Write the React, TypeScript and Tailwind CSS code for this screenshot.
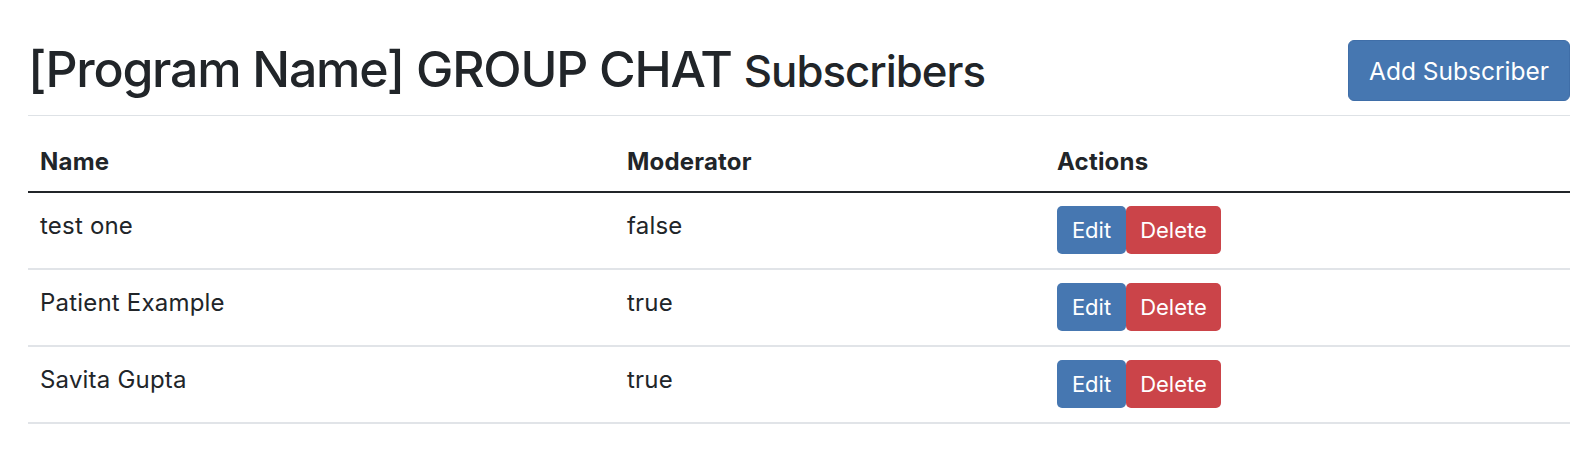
import React from "react";

const rows = [
  { name: "test one", moderator: "false" },
  { name: "Patient Example", moderator: "true" },
  { name: "Savita Gupta", moderator: "true" },
];

export default function App() {
  return (
    <div
      className="min-h-[466px] bg-white pl-[28px] pr-[24px] text-[#212529]"
      style={{ fontFamily: "Inter, 'Noto Sans', sans-serif" }}
    >
      <div className="flex items-center justify-between border-b border-[#dee2e6] pt-[39px] pb-[13px]">
        <h2 className="text-[50px] font-medium leading-[60px] tracking-[-1.25px]">
          [Program Name] GROUP CHAT{" "}
          <small className="text-[0.875em] tracking-[-1px]">Subscribers</small>
        </h2>
        <button className="h-[61px] rounded-[6px] border border-[#3f6ea8] bg-[#4677b1] px-[20px] text-[24.5px] leading-[36px] text-white">
          Add Subscriber
        </button>
      </div>

      <table className="mt-[16px] w-full border-collapse text-[24px] leading-[36px] tracking-[0.2px]">
        <thead>
          <tr className="border-b-2 border-[#212529]">
            <th className="w-[587px] px-[12px] pt-[12px] pb-[11px] text-left font-bold">Name</th>
            <th className="w-[430px] px-[12px] pt-[12px] pb-[11px] text-left font-bold">Moderator</th>
            <th className="px-[12px] pt-[12px] pb-[11px] text-left font-bold">Actions</th>
          </tr>
        </thead>
        <tbody>
          {rows.map((r) => (
            <tr key={r.name} className="h-[77px] border-b-2 border-[#e1e4e8]">
              <td className="px-[12px] pt-[15px] align-top">{r.name}</td>
              <td className="px-[12px] pt-[15px] align-top">{r.moderator}</td>
              <td className="px-[12px] pt-[13px] align-top">
                <div className="flex">
                  <button className="h-[48px] w-[69px] rounded-[5px] bg-[#4677b1] text-[22px] leading-[30px] tracking-normal text-white">
                    Edit
                  </button>
                  <button className="h-[48px] w-[95px] rounded-[5px] bg-[#cb4449] text-[22px] leading-[30px] tracking-normal text-white">
                    Delete
                  </button>
                </div>
              </td>
            </tr>
          ))}
        </tbody>
      </table>
    </div>
  );
}
